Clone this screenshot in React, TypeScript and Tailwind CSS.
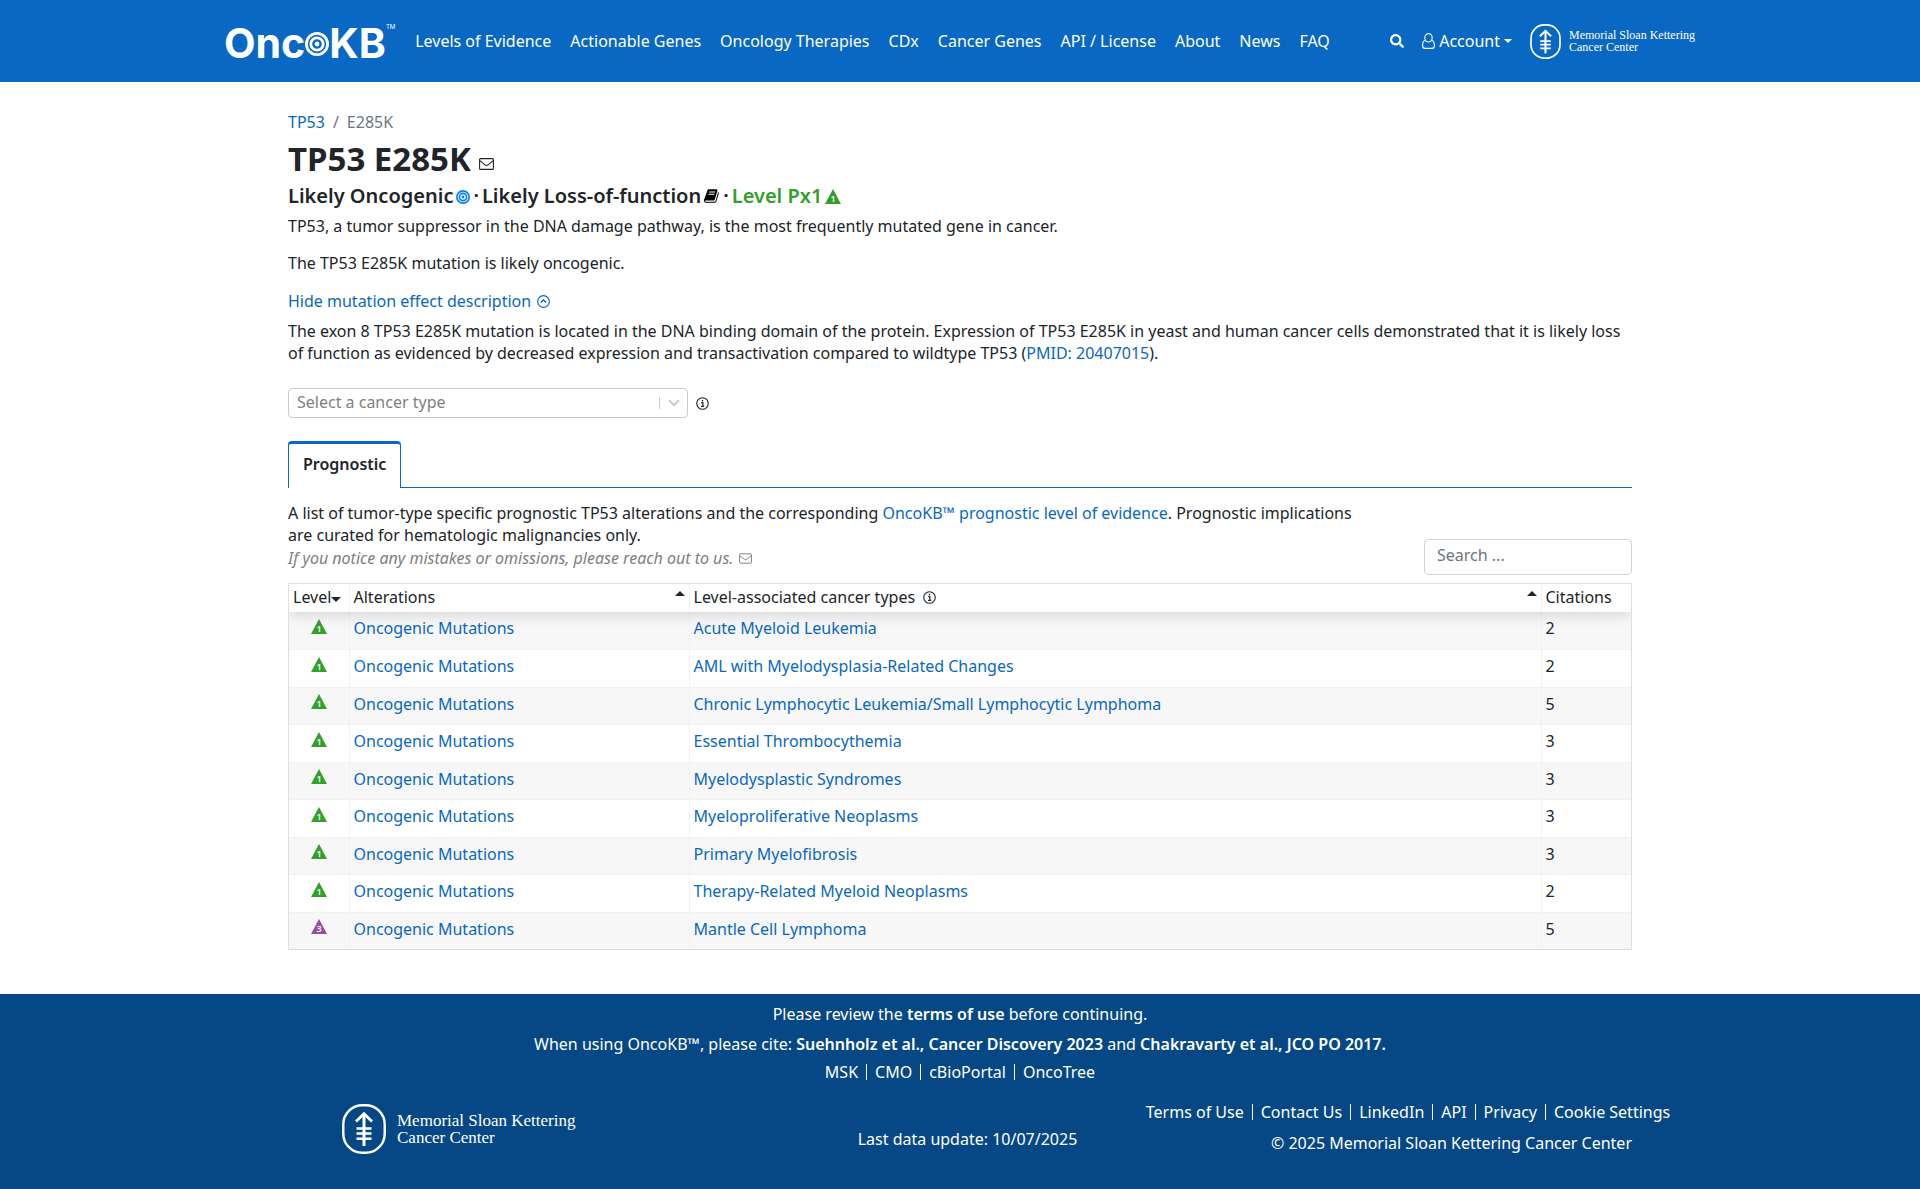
import type { ReactNode } from 'react';
import { FaSearch } from 'react-icons/fa';

const NAV_LINKS = [
  'Levels of Evidence',
  'Actionable Genes',
  'Oncology Therapies',
  'CDx',
  'Cancer Genes',
  'API / License',
  'About',
  'News',
  'FAQ',
];

interface Implication {
  level: '1' | '3';
  cancerType: string;
  citations: number;
}

const IMPLICATIONS: Implication[] = [
  { level: '1', cancerType: 'Acute Myeloid Leukemia', citations: 2 },
  { level: '1', cancerType: 'AML with Myelodysplasia-Related Changes', citations: 2 },
  { level: '1', cancerType: 'Chronic Lymphocytic Leukemia/Small Lymphocytic Lymphoma', citations: 5 },
  { level: '1', cancerType: 'Essential Thrombocythemia', citations: 3 },
  { level: '1', cancerType: 'Myelodysplastic Syndromes', citations: 3 },
  { level: '1', cancerType: 'Myeloproliferative Neoplasms', citations: 3 },
  { level: '1', cancerType: 'Primary Myelofibrosis', citations: 3 },
  { level: '1', cancerType: 'Therapy-Related Myeloid Neoplasms', citations: 2 },
  { level: '3', cancerType: 'Mantle Cell Lymphoma', citations: 5 },
];

function Target({ className }: { className: string }) {
  return (
    <svg viewBox="0 0 24 24" className={className} fill="none" stroke="currentColor" aria-hidden="true">
      <circle cx="12" cy="12" r="10.6" strokeWidth="2.8" />
      <circle cx="12" cy="12" r="6.2" strokeWidth="2.8" />
      <circle cx="12" cy="12" r="2.4" fill="currentColor" stroke="none" />
    </svg>
  );
}

function Envelope({ className }: { className: string }) {
  return (
    <svg viewBox="0 0 15 12" className={className} fill="none" stroke="currentColor" aria-hidden="true">
      <rect x="0.6" y="0.6" width="13.8" height="10.8" rx="1" strokeWidth="1.1" />
      <path d="M0.8 2.6 L6 6.9 Q7.5 8.2 9 6.9 L14.2 2.6" strokeWidth="1.1" />
    </svg>
  );
}

function Book() {
  return (
    <svg viewBox="0 0 1792 1792" className="h-4 w-4 text-black" fill="currentColor" aria-hidden="true">
      <path d="M1639 478q40 57 18 129l-275 906q-19 64-76.5 107.5t-122.5 43.5h-923q-77 0-148.5-53.5t-99.5-131.5q-24-67-2-127 0-4 3-27t4-37q1-8-3-21.5t-3-19.5q2-11 8-21t16.5-23.5 16.5-23.5q23-38 45-91.5t30-91.5q3-10 .5-30t-.5-28q3-11 17-28t17-23q21-36 42-92t25-90q1-9-2.5-32t.5-28q4-13 22-30.5t22-22.5q19-26 42.5-84.5t27.5-96.5q1-8-3-25.5t-2-26.5q2-8 9-18t18-23 17-21q8-12 16.5-30.5t15-35 16-36 19.5-32 26.5-23.5 36-11.5 47.5 5.5l-1 3q38-9 51-9h761q74 0 114 56t18 130l-274 906q-36 119-71.5 153.5t-128.5 34.5h-869q-27 0-38 15-11 16-1 43 24 70 144 70h923q29 0 56-15.5t35-41.5l300-987q7-22 5-57 38 15 59 43zm-1064 2q-4 13 2 22.5t20 9.5h608q13 0 25.5-9.5t16.5-22.5l21-64q4-13-2-22.5t-20-9.5h-608q-13 0-25.5 9.5t-16.5 22.5zm-83 256q-4 13 2 22.5t20 9.5h608q13 0 25.5-9.5t16.5-22.5l21-64q4-13-2-22.5t-20-9.5h-608q-13 0-25.5 9.5t-16.5 22.5z" />
    </svg>
  );
}

function UserOutline() {
  return (
    <svg viewBox="0 0 13 16" className="h-4 w-[13px]" fill="none" stroke="currentColor" strokeWidth="1.1" aria-hidden="true">
      <ellipse cx="6.5" cy="4.8" rx="3.7" ry="4.2" />
      <path d="M3.2 7.2 C1.2 7.8 0.6 10 0.6 12.4 C0.6 14.3 1.6 15.4 3 15.4 H10 C11.4 15.4 12.4 14.3 12.4 12.4 C12.4 10 11.8 7.8 9.8 7.2" />
    </svg>
  );
}

function InfoCircle({ className }: { className: string }) {
  return (
    <svg viewBox="0 0 14 14" className={className} fill="none" stroke="currentColor" aria-hidden="true">
      <circle cx="7" cy="7" r="6.2" strokeWidth="1.2" />
      <path d="M5.6 6 H7.4 V10.2 M5.4 10.2 H8.8" strokeWidth="1.3" />
      <circle cx="7" cy="3.9" r="0.9" fill="currentColor" stroke="none" />
    </svg>
  );
}

function LevelIcon({ level }: { level: '1' | '3' }) {
  return (
    <svg viewBox="0 0 16 15" className="h-[15px] w-4" role="img" aria-label={`Level Px${level}`}>
      <path d="M8 0 L16 15 H0 Z" fill={level === '1' ? '#33a02c' : '#984ea3'} />
      <text x="8" y="12.6" fontSize="9" fontWeight="600" textAnchor="middle" fill="#fff">
        {level}
      </text>
    </svg>
  );
}

function MskMark({ className }: { className: string }) {
  return (
    <svg viewBox="0 0 44 50" className={className} fill="none" stroke="currentColor" aria-hidden="true">
      <rect x="1.3" y="1.3" width="41.4" height="47.4" rx="19" strokeWidth="2.4" />
      <path d="M22 9.5 V42" strokeWidth="3" />
      <path d="M14 17.5 L22 9.8 L30 17.5" strokeWidth="2.8" />
      <path d="M14.5 24.5 H29.5 M14.5 29.5 H29.5 M14.5 34.8 H29.5" strokeWidth="2.4" />
    </svg>
  );
}

function Link({ children, className = 'text-[#0968c3]' }: { children: ReactNode; className?: string }) {
  return (
    <a href="#" className={className}>
      {children}
    </a>
  );
}

function FooterLinks({ items }: { items: string[] }) {
  return (
    <div className="flex divide-x divide-white leading-4">
      {items.map(item => (
        <a key={item} href="#" className="px-2 first:pl-0 last:pr-0">
          {item}
        </a>
      ))}
    </div>
  );
}

function Header() {
  return (
    <header className="bg-[#0968c3] text-white">
      <div className="mx-auto flex h-[82px] max-w-[1472px] items-center">
        <a href="#" aria-label="OncoKB" className="mr-5 flex items-start pt-1 font-['Inter',sans-serif] text-[41px] leading-[46px] font-bold">
          <span>Onc</span>
          <Target className="mt-3 h-6 w-6" />
          <span>KB</span>
          <span className="mt-1 text-[6px] leading-none font-normal">TM</span>
        </a>
        <nav className="flex gap-[19px]">
          {NAV_LINKS.map(link => (
            <a key={link} href="#">
              {link}
            </a>
          ))}
        </nav>
        <div className="ml-auto flex items-center">
          <button type="button" aria-label="Search" className="mr-[18px]">
            <FaSearch size={14} />
          </button>
          <button type="button" className="mr-[18px] flex items-center gap-1">
            <UserOutline />
            Account
            <span className="border-x-4 border-t-4 border-x-transparent border-t-white" />
          </button>
          <a href="#" className="flex items-center gap-2 pr-px font-['Liberation_Serif',serif] text-xs leading-3">
            <MskMark className="h-[35px] w-[31px]" />
            <span>
              Memorial Sloan Kettering
              <br />
              Cancer Center
            </span>
          </a>
        </div>
      </div>
    </header>
  );
}

function ImplicationTable() {
  return (
    <div className="mt-2 overflow-hidden border border-[#dfdfdf]">
      <table className="w-full table-fixed border-collapse text-left">
        <colgroup>
          <col className="w-[60px]" />
          <col className="w-[340px]" />
          <col />
          <col className="w-[90px]" />
        </colgroup>
        <thead className="relative z-10 shadow-[0_2px_15px_0_rgba(0,0,0,0.15)]">
          <tr className="h-7 bg-white [&>th]:px-1 [&>th]:pb-[2px] [&>th]:font-normal">
            <th className="border-r border-[#f2f2f2]">
              <div className="flex items-center">
                Level
                <span className="mt-1 border-x-5 border-t-5 border-x-transparent border-t-[#212529]" />
              </div>
            </th>
            <th className="border-r border-[#f2f2f2]">
              <div className="flex items-center justify-between">
                Alterations
                <span className="mb-2 border-x-5 border-b-5 border-x-transparent border-b-[#212529]" />
              </div>
            </th>
            <th className="border-r border-[#f2f2f2]">
              <div className="flex items-center">
                Level-associated cancer types
                <InfoCircle className="ml-2 h-[13px] w-[13px]" />
                <span className="mb-2 ml-auto border-x-5 border-b-5 border-x-transparent border-b-[#212529]" />
              </div>
            </th>
            <th>Citations</th>
          </tr>
        </thead>
        <tbody>
          {IMPLICATIONS.map(row => (
            <tr
              key={row.cancerType}
              className="border-b border-[#f2f2f2] last:border-b-0 odd:h-[37px] odd:bg-[#f7f7f7] even:h-[38px] [&>td]:px-1 [&>td]:pb-1"
            >
              <td className="border-r border-[#f2f2f2]">
                <div className="flex justify-center pb-1">
                  <LevelIcon level={row.level} />
                </div>
              </td>
              <td className="border-r border-[#f2f2f2]">
                <Link>Oncogenic Mutations</Link>
              </td>
              <td className="border-r border-[#f2f2f2]">
                <Link>{row.cancerType}</Link>
              </td>
              <td>{row.citations}</td>
            </tr>
          ))}
        </tbody>
      </table>
    </div>
  );
}

function Footer() {
  return (
    <footer className="bg-[#064885] pb-[35px] text-white">
      <div className="flex flex-col items-center pt-[9px]">
        <p>
          Please review the <Link className="font-semibold">terms of use</Link> before continuing.
        </p>
        <p className="mt-2">
          When using OncoKB™, please cite: <Link className="font-semibold">Suehnholz et al., Cancer Discovery 2023</Link> and{' '}
          <Link className="font-semibold">Chakravarty et al., JCO PO 2017.</Link>
        </p>
        <div className="mt-[9px]">
          <FooterLinks items={['MSK', 'CMO', 'cBioPortal', 'OncoTree']} />
        </div>
      </div>
      <div className="mx-auto mt-6 grid w-[70%] grid-cols-3">
        <a
          href="#"
          className="ml-[54px] flex items-center gap-[11px] font-['Liberation_Serif',serif] text-[17px] leading-[17px] whitespace-nowrap"
        >
          <MskMark className="h-[50px] w-11" />
          <span>
            Memorial Sloan Kettering
            <br />
            Cancer Center
          </span>
        </a>
        <p className="mt-6 pl-[15px] text-center">Last data update: 10/07/2025</p>
        <div className="flex flex-col items-center whitespace-nowrap">
          <FooterLinks items={['Terms of Use', 'Contact Us', 'LinkedIn', 'API', 'Privacy', 'Cookie Settings']} />
          <p className="mt-3 self-end">© 2025 Memorial Sloan Kettering Cancer Center</p>
        </div>
      </div>
    </footer>
  );
}

export default function App() {
  return (
    <div className="bg-white font-['Noto_Sans',sans-serif] text-base leading-[22px] text-[#212529]">
      <Header />
      <main className="mx-auto w-[70%] pt-[29px] pb-11">
        <nav aria-label="Breadcrumb" className="flex gap-2">
          <Link>TP53</Link>
          <span className="text-[#6c757d]">/</span>
          <span className="text-[#6c757d]">E285K</span>
        </nav>

        <h1 className="mt-2 flex h-[36px] items-center text-[33px] font-bold">
          TP53 E285K
          <a href="#" aria-label="Send feedback" className="mt-[10px] ml-2">
            <Envelope className="h-3 w-[15px]" />
          </a>
        </h1>

        <h2 className="mt-[7px] flex h-6 items-center text-xl font-semibold">
          Likely Oncogenic
          <Target className="mt-[2px] ml-[3px] h-[14px] w-[14px] text-[#007fff]" />
          <span className="mx-[3px]">·</span>
          Likely Loss-of-function
          <span className="ml-[3px]">
            <Book />
          </span>
          <span className="mx-[3px]">·</span>
          <span className="mr-[3px] text-[#33a02c]">Level Px1</span>
          <LevelIcon level="1" />
        </h2>

        <p className="mt-[7px]">TP53, a tumor suppressor in the DNA damage pathway, is the most frequently mutated gene in cancer.</p>
        <p className="mt-[15px]">The TP53 E285K mutation is likely oncogenic.</p>
        <button type="button" className="mt-4 flex items-center gap-[6px] text-[#0968c3]">
          Hide mutation effect description
          <svg viewBox="0 0 14 14" className="h-[13px] w-[13px]" fill="none" stroke="currentColor" strokeWidth="1.3" aria-hidden="true">
            <circle cx="7" cy="7" r="6.3" />
            <path d="M4 8.2 L7 5.4 L10 8.2" strokeWidth="1.5" />
          </svg>
        </button>
        <p className="mt-2">
          The exon 8 TP53 E285K mutation is located in the DNA binding domain of the protein. Expression of TP53 E285K in yeast and
          human cancer cells demonstrated that it is likely loss of function as evidenced by decreased expression and transactivation
          compared to wildtype TP53 (<Link>PMID: 20407015</Link>).
        </p>

        <div className="mt-6 flex items-center gap-2">
          <div className="relative w-[400px]">
            <select
              aria-label="Cancer type"
              defaultValue=""
              className="block h-[30px] w-full appearance-none rounded-sm border border-[#cccccc] bg-white px-2 pb-[2px] text-[#808080]"
            >
              <option value="">Select a cancer type</option>
            </select>
            <div className="pointer-events-none absolute inset-y-0 right-2 flex items-center gap-2 text-[#cccccc]">
              <span className="h-3 w-px bg-[#cccccc]" />
              <svg viewBox="0 0 12 8" className="h-2 w-3" fill="none" stroke="currentColor" strokeWidth="2" aria-hidden="true">
                <path d="M1 1.2 L6 6 L11 1.2" />
              </svg>
            </div>
          </div>
          <InfoCircle className="h-[13px] w-[13px]" />
        </div>

        <div role="tablist" className="mt-[23px] flex h-[47px] border-b border-[#0968c3]">
          <button
            type="button"
            role="tab"
            aria-selected="true"
            className="-mb-px rounded-t border-x border-t-3 border-[#0968c3] bg-white px-[14px] pb-1 font-semibold"
          >
            Prognostic
          </button>
        </div>

        <div className="mt-[14px] flex items-end justify-between">
          <div className="w-4/5">
            <p>
              A list of tumor-type specific prognostic TP53 alterations and the corresponding{' '}
              <Link>OncoKB™ prognostic level of evidence</Link>. Prognostic implications are curated for hematologic malignancies
              only.
            </p>
            <p className="mt-px mb-[6px] flex items-center gap-[6px] text-[#808080]">
              <i>If you notice any mistakes or omissions, please reach out to us.</i>
              <Envelope className="h-[11px] w-[13px]" />
            </p>
          </div>
          <input
            type="search"
            aria-label="Search table"
            placeholder="Search ..."
            className="h-9 w-[208px] rounded border border-[#ced4da] px-3 pb-1 placeholder:text-[#6c757d]"
          />
        </div>
        <ImplicationTable />
      </main>
      <Footer />
    </div>
  );
}
